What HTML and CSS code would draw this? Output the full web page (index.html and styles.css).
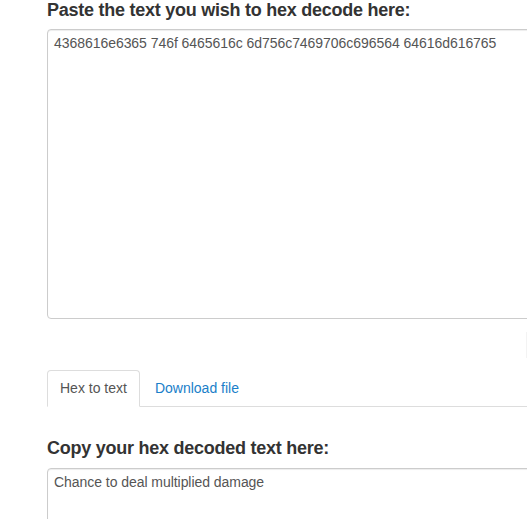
FILE: index.html
```html
<!DOCTYPE html>
<html>
<head>
<meta charset="utf-8">
<link rel="stylesheet" href="styles.css">
</head>
<body>
<div class="page">
  <h4 class="title">Paste the text you wish to hex decode here:</h4>
  <textarea class="field field-input">4368616e6365 746f 6465616c 6d756c7469706c696564 64616d616765</textarea>
  <div class="actions"><span class="ghost-btn"></span></div>
  <ul class="tabs">
    <li><a class="tab active">Hex to text</a></li>
    <li><a class="tab link">Download file</a></li>
  </ul>
  <div class="tab-content">
    <h4 class="title">Copy your hex decoded text here:</h4>
    <textarea class="field field-output">Chance to deal multiplied damage</textarea>
  </div>
</div>
</body>
</html>
```
FILE: styles.css
```css
html, body {
  margin: 0;
  padding: 0;
  overflow: hidden;
  background: #fff;
}
body {
  font-family: "Liberation Sans", Arial, sans-serif;
  font-size: 14px;
  color: #333;
}
.page {
  padding-left: 47px;
  width: 600px;
}
.title {
  margin: 0 0 9px 0;
  font-size: 18px;
  line-height: 20px;
  font-weight: bold;
  letter-spacing: -0.25px;
  color: #333;
}
.field {
  display: block;
  box-sizing: border-box;
  width: 100%;
  margin: 0;
  padding: 3px 6px;
  font-family: "Liberation Sans", Arial, sans-serif;
  font-size: 14px;
  line-height: 20px;
  letter-spacing: -0.05px;
  color: #555;
  background: #fff;
  border: 1px solid #ccc;
  border-radius: 4px;
  box-shadow: inset 0 1px 1px rgba(0,0,0,.075);
  resize: none;
  outline: none;
}
.field-input {
  height: 290px;
}
.field-output {
  height: 100px;
}
.actions {
  display: flex;
  height: 51px;
  box-sizing: border-box;
  padding: 13px 0 12px 479px;
}
.ghost-btn {
  display: block;
  width: 60px;
  height: 26px;
  border-left: 1px solid #f3f3f3;
}
.tabs {
  display: flex;
  list-style: none;
  margin: 0;
  padding: 0;
  border-bottom: 1px solid #ddd;
}
.tabs li {
  margin-bottom: -1px;
}
.tab {
  display: block;
  padding: 7px 12px 8px;
  line-height: 20px;
  border: 1px solid transparent;
  border-radius: 4px 4px 0 0;
  text-decoration: none;
}
.tab.active {
  color: #555;
  background: #fff;
  border-color: #ddd;
  border-bottom-color: transparent;
}
.tab.link {
  margin-left: 2px;
  color: #1a80c9;
}
.tab-content {
  padding-top: 31px;
}
.tab-content .title {
  margin-bottom: 10px;
}
```
